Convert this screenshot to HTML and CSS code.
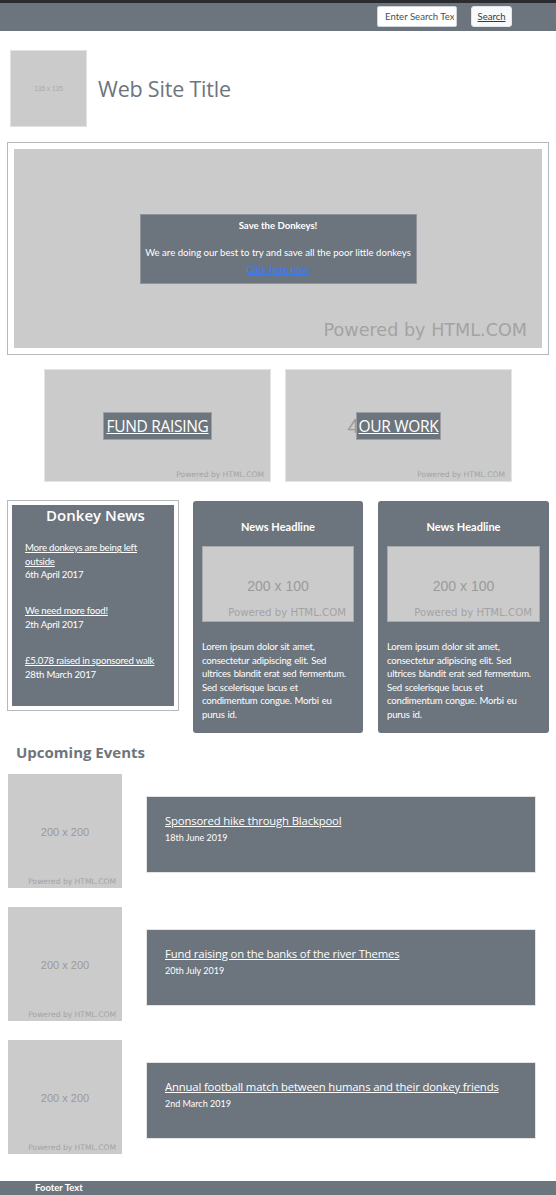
FILE: index.html
```html
<!DOCTYPE html>
<html lang="en">
<head>
<meta charset="utf-8">
<title>Web Site Title</title>
<link rel="stylesheet" href="styles.css">
</head>
<body>
<div class="topbar">
  <input class="search-input" type="text" placeholder="Enter Search Text">
  <button class="search-btn" type="button">Search</button>
</div>

<header class="site-header">
  <div class="logo ph"><span class="logo-text">135 x 135</span></div>
  <h1 class="site-title">Web Site Title</h1>
</header>

<section class="hero">
  <div class="hero-img ph">
    <div class="hero-box">
      <p class="hero-head">Save the Donkeys!</p>
      <p class="hero-text">We are doing our best to try and save all the poor little donkeys</p>
      <a class="hero-link" href="#">Click here now</a>
    </div>
    <span class="powered powered-lg">Powered by HTML.COM</span>
  </div>
</section>

<section class="tiles">
  <div class="tile ph">
    <span class="tile-size">400 x 200</span>
    <a class="tile-label" href="#">FUND RAISING</a>
    <span class="powered powered-sm">Powered by HTML.COM</span>
  </div>
  <div class="tile ph">
    <span class="tile-size">400 x 200</span>
    <a class="tile-label" href="#">OUR WORK</a>
    <span class="powered powered-sm">Powered by HTML.COM</span>
  </div>
</section>

<section class="news-row">
  <div class="dnews-frame">
    <div class="dnews">
      <h2 class="dnews-title">Donkey News</h2>
      <div class="dnews-item"><a href="#">More donkeys are being left outside</a><br>6th April 2017</div>
      <div class="dnews-item"><a href="#">We need more food!</a><br>2th April 2017</div>
      <div class="dnews-item"><a href="#">£5.078 raised in sponsored walk</a><br>28th March 2017</div>
    </div>
  </div>
  <div class="ncard">
    <h3 class="ncard-title">News Headline</h3>
    <div class="ncard-img ph"><span class="ncard-size">200 x 100</span><span class="powered powered-md">Powered by HTML.COM</span></div>
    <p class="ncard-text">Lorem ipsum dolor sit amet, consectetur adipiscing elit. Sed ultrices blandit erat sed fermentum. Sed scelerisque lacus et condimentum congue. Morbi eu purus id.</p>
  </div>
  <div class="ncard ncard-2">
    <h3 class="ncard-title">News Headline</h3>
    <div class="ncard-img ph"><span class="ncard-size">200 x 100</span><span class="powered powered-md">Powered by HTML.COM</span></div>
    <p class="ncard-text">Lorem ipsum dolor sit amet, consectetur adipiscing elit. Sed ultrices blandit erat sed fermentum. Sed scelerisque lacus et condimentum congue. Morbi eu purus id.</p>
  </div>
</section>

<section class="events">
  <h2 class="events-title">Upcoming Events</h2>
  <div class="event">
    <div class="event-img ph"><span class="event-size">200 x 200</span><span class="powered powered-sm">Powered by HTML.COM</span></div>
    <div class="event-box">
      <a class="event-link" href="#">Sponsored hike through Blackpool</a>
      <div class="event-date">18th June 2019</div>
    </div>
  </div>
  <div class="event">
    <div class="event-img ph"><span class="event-size">200 x 200</span><span class="powered powered-sm">Powered by HTML.COM</span></div>
    <div class="event-box">
      <a class="event-link" href="#">Fund raising on the banks of the river Themes</a>
      <div class="event-date">20th July 2019</div>
    </div>
  </div>
  <div class="event">
    <div class="event-img ph"><span class="event-size">200 x 200</span><span class="powered powered-sm">Powered by HTML.COM</span></div>
    <div class="event-box">
      <a class="event-link" href="#">Annual football match between humans and their donkey friends</a>
      <div class="event-date">2nd March 2019</div>
    </div>
  </div>
</section>

<footer class="footer"><span class="footer-text">Footer Text</span></footer>
</body>
</html>
```

FILE: styles.css
```css
* { box-sizing: border-box; }
html, body { margin: 0; padding: 0; background: #fff; }
body {
  font-family: "Lato", "Liberation Sans", sans-serif;
  color: #fff;
}
p, h1, h2, h3 { margin: 0; }

.ph { background: #cbcbcb; position: relative; }

.powered {
  position: absolute;
  font-family: "DejaVu Sans", sans-serif;
  color: #a3a3a3;
  white-space: nowrap;
}
.powered-lg { font-size: 17.6px; right: 15px; bottom: 8px; }
.powered-md { font-size: 10.2px; right: 7px; bottom: 3px; }
.powered-sm { font-size: 7.6px; right: 6px; bottom: 2px; }

/* top bar */
.topbar {
  height: 31px;
  border-top: 3px solid #2a2c2f;
  background: #6c757d;
  display: flex;
  justify-content: flex-end;
  align-items: flex-start;
  padding: 3px 44px 0 0;
  gap: 14px;
}
.search-input {
  width: 80px;
  height: 21px;
  margin: 0;
  border: 1px solid #ced4da;
  border-radius: 2px;
  background: #fff;
  padding: 0 2px 0 7px;
  font-family: "Lato", "Liberation Sans", sans-serif;
  font-size: 9.6px;
  color: #495057;
  outline: none;
}
.search-input::placeholder { color: #495057; opacity: 1; }
.search-btn {
  width: 41px;
  height: 21px;
  margin: 0;
  border: 1px solid #e3e6e9;
  border-radius: 3px;
  background: #f8f9fa;
  font-family: "Lato", "Liberation Sans", sans-serif;
  font-size: 9.5px;
  color: #343a40;
  text-decoration: underline;
  padding: 0;
}

/* header */
.site-header {
  display: flex;
  align-items: center;
  gap: 11px;
  padding: 19px 0 0 10px;
}
.logo {
  width: 77px;
  height: 77px;
  border: 1px solid #e2e2e2;
  display: flex;
  align-items: center;
  justify-content: center;
}
.logo-text {
  font-family: "Liberation Sans", sans-serif;
  font-size: 6.5px;
  color: #a9a9a9;
}
.site-title {
  font-family: "Open Sans", sans-serif;
  font-weight: 400;
  font-size: 21.5px;
  color: #6c757d;
  letter-spacing: -0.2px;
}

/* hero */
.hero {
  margin: 15px 0 0 7px;
  width: 542px;
  border: 1px solid #b4b9be;
  padding: 6px;
}
.hero-img {
  height: 199px;
  display: flex;
  align-items: center;
  justify-content: center;
}
.hero-box {
  width: 277px;
  height: 70px;
  background: #6c757d;
  border: 1px solid #8f959a;
  text-align: center;
  font-size: 9.6px;
  padding-top: 4px;
  position: relative;
  z-index: 1;
}
.hero-head { font-weight: 700; line-height: 14px; }
.hero-text { margin-top: 13px; line-height: 14px; }
.hero-link { display: block; margin-top: 3px; line-height: 14px; color: #3d7bf0; }

/* tiles */
.tiles {
  display: flex;
  justify-content: center;
  gap: 14px;
  margin-top: 14px;
}
.tile {
  width: 227px;
  height: 113px;
  border: 1px solid #e4e4e4;
  display: flex;
  align-items: center;
  justify-content: center;
}
.tile-size {
  position: absolute;
  left: 0; right: 10px; top: 44px;
  text-align: center;
  font-family: "Liberation Sans", sans-serif;
  font-size: 21px;
  color: #9a9a9a;
}
.tile-label {
  position: relative;
  font-family: "Open Sans", sans-serif;
  font-size: 15.5px;
  line-height: 26px;
  color: #fff;
  background: #6c757d;
  border: 1px solid #9aa0a6;
  padding: 0 2px;
  letter-spacing: -0.3px;
  margin-top: 1px;
}

/* news row */
.news-row {
  display: flex;
  align-items: flex-start;
  margin-top: 18px;
  padding-left: 7px;
}
.dnews-frame {
  width: 172px;
  border: 1px solid #b4b9be;
  padding: 4px;
}
.dnews {
  background: #6c757d;
  height: 201px;
  padding: 0 8px 0 13px;
  font-size: 9.6px;
  line-height: 13.6px;
  letter-spacing: -0.2px;
}
.dnews-title {
  font-family: "Open Sans", sans-serif;
  font-weight: 600;
  font-size: 15px;
  line-height: 20px;
  letter-spacing: 0;
  text-align: center;
  margin-bottom: 16px;
}
.dnews-item { margin-bottom: 22.5px; }
.dnews a { color: #fff; }

.ncard {
  width: 170px;
  margin: 1px 0 0 14px;
  background: #6c757d;
  border-radius: 3px;
  padding: 9px 9px 11px;
}
.ncard-2 { width: 171px; margin-left: 15px; }
.ncard-title {
  font-size: 11px;
  font-weight: 700;
  line-height: 15px;
  text-align: center;
  margin-top: 9px;
  margin-bottom: 12px;
}
.ncard-img {
  height: 76px;
  border: 1px solid #a9a9a9;
}
.ncard-size {
  position: absolute;
  left: 0; right: 0; top: 31px;
  text-align: center;
  font-family: "Liberation Sans", sans-serif;
  font-size: 14px;
  color: #9a9a9a;
}
.ncard-text {
  margin-top: 18px;
  font-size: 9.6px;
  line-height: 13.6px;
  letter-spacing: -0.22px;
  word-spacing: 0.6px;
}

/* events */
.events { padding: 0 0 8px 8px; }
.events-title {
  font-family: "Open Sans", sans-serif;
  font-weight: 700;
  font-size: 15px;
  line-height: 20px;
  color: #6c757d;
  margin: 9px 0 12px 8px;
}
.event {
  display: flex;
  align-items: flex-start;
  gap: 24px;
  margin-bottom: 19px;
}
.event-img {
  width: 114px;
  height: 114px;
  flex: none;
}
.event-size {
  position: absolute;
  left: 0; right: 0; top: 52px;
  text-align: center;
  font-family: "Liberation Sans", sans-serif;
  font-size: 11px;
  color: #9a9a9a;
}
.event-box {
  width: 390px;
  height: 77px;
  margin-top: 22px;
  background: #6c757d;
  border: 1px solid #e4e4e4;
  padding: 12px 18px 0;
}
.event-link {
  font-family: "Open Sans", sans-serif;
  font-size: 11.3px;
  line-height: 16px;
  color: #fff;
  letter-spacing: -0.15px;
}
.event-date {
  font-size: 9px;
  line-height: 12px;
  margin-top: 3px;
}

/* footer */
.footer {
  background: #6c757d;
  height: 30px;
  padding: 1px 0 0 35px;
  font-size: 9.5px;
  line-height: 12px;
}
.footer-text {
  font-weight: 700;
}
```
